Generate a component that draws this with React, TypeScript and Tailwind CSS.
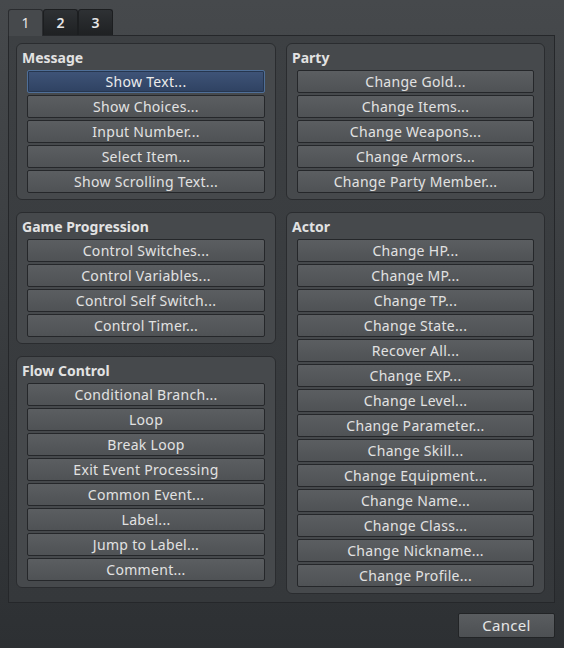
const leftGroups = [
  {
    title: "Message",
    items: ["Show Text...", "Show Choices...", "Input Number...", "Select Item...", "Show Scrolling Text..."],
  },
  {
    title: "Game Progression",
    items: ["Control Switches...", "Control Variables...", "Control Self Switch...", "Control Timer..."],
  },
  {
    title: "Flow Control",
    items: [
      "Conditional Branch...",
      "Loop",
      "Break Loop",
      "Exit Event Processing",
      "Common Event...",
      "Label...",
      "Jump to Label...",
      "Comment...",
    ],
  },
]

const rightGroups = [
  {
    title: "Party",
    items: ["Change Gold...", "Change Items...", "Change Weapons...", "Change Armors...", "Change Party Member..."],
  },
  {
    title: "Actor",
    items: [
      "Change HP...",
      "Change MP...",
      "Change TP...",
      "Change State...",
      "Recover All...",
      "Change EXP...",
      "Change Level...",
      "Change Parameter...",
      "Change Skill...",
      "Change Equipment...",
      "Change Name...",
      "Change Class...",
      "Change Nickname...",
      "Change Profile...",
    ],
  },
]

function CmdButton({ label, active }: { label: string; active?: boolean }) {
  return (
    <button
      className={
        active
          ? "h-[23px] w-full rounded-[2px] border border-[#4f6f98] bg-gradient-to-b from-[#3f5478] to-[#2f4262] text-[14px] leading-[21px] tracking-[0.3px] text-[#ececec] shadow-[inset_0_0_0_1px_#26364f]"
          : "h-[23px] w-full rounded-[2px] border border-[#25272a] bg-gradient-to-b from-[#5b5e61] to-[#4f5255] text-[14px] leading-[21px] tracking-[0.3px] text-[#e2e2e2]"
      }
    >
      {label}
    </button>
  )
}

function Group({ title, items }: { title: string; items: string[] }) {
  return (
    <div className="rounded-[6px] border border-[#2a2c2f] bg-[#46494c] px-[10px] pb-[6px]">
      <div className="-ml-[5px] h-[26px] pt-[1px] text-[14px] font-bold leading-[26px] text-[#e2e2e2]">
        {title}
      </div>
      <div className="flex flex-col gap-[2px]">
        {items.map((it) => (
          <CmdButton key={it} label={it} active={it === "Show Text..."} />
        ))}
      </div>
    </div>
  )
}

export default function App() {
  return (
    <div
      className="h-[648px] w-[564px] overflow-hidden bg-gradient-to-b from-[#46494c] to-[#2d3033] pl-[8px] pr-[9px] pt-[9px]"
      style={{ fontFamily: "'Noto Sans', 'Open Sans', sans-serif" }}
    >
      {/* Tabs */}
      <div className="flex h-[26px]">
        <div className="relative z-10 -mb-px w-[35px] rounded-t-[3px] border border-b-0 border-[#2a2c2f] bg-[#46494c] text-center text-[14px] leading-[26px] text-[#e6e6e6]">
          1
        </div>
        <div className="w-[35px] rounded-t-[3px] border border-b-0 border-[#1c1e20] bg-gradient-to-b from-[#2e3134] to-[#1f2123] text-center text-[14px] font-semibold leading-[26px] text-[#e6e6e6]">
          2
        </div>
        <div className="w-[35px] rounded-t-[3px] border border-b-0 border-[#1c1e20] bg-gradient-to-b from-[#2e3134] to-[#1f2123] text-center text-[14px] font-semibold leading-[26px] text-[#e6e6e6]">
          3
        </div>
      </div>

      {/* Pane */}
      <div className="h-[568px] border border-[#25272a] bg-gradient-to-b from-[#3d4043] to-[#35383b] pl-[7px] pr-[9px] pt-[7px]">
        <div className="flex gap-[10px]">
          <div className="flex w-[260px] flex-col gap-[12px]">
            {leftGroups.map((g) => (
              <Group key={g.title} title={g.title} items={g.items} />
            ))}
          </div>
          <div className="flex w-[259px] flex-col gap-[12px]">
            {rightGroups.map((g) => (
              <Group key={g.title} title={g.title} items={g.items} />
            ))}
          </div>
        </div>
      </div>

      {/* Footer */}
      <div className="flex justify-end pt-[10px]">
        <button className="h-[25px] w-[97px] rounded-[2px] border border-[#222426] bg-gradient-to-b from-[#5a5d60] to-[#4d5053] text-[15px] leading-[23px] tracking-[0.3px] text-[#e6e6e6]">
          Cancel
        </button>
      </div>
    </div>
  )
}
